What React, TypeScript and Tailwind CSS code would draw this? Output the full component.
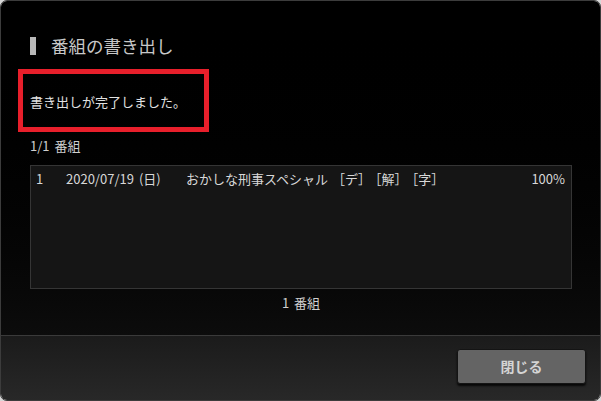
const font = { fontFamily: '"Noto Sans CJK JP", "Noto Sans", sans-serif' };

const tags = ["［デ］", "［解］", "［字］"];

export default function App() {
  return (
    <div className="w-[601px] h-[401px] bg-[#d8d8d8]" style={font}>
      <div className="relative flex h-full w-full flex-col overflow-hidden rounded-[7px] border border-[#3c3c3c]">
        <div className="flex h-[334px] flex-col bg-gradient-to-b from-[#000000] to-[#0c0c0c] pl-[29px] pr-[28px]">
          <div className="mt-[35px] flex items-center gap-[15px]">
            <span className="h-[18px] w-[6px] bg-[#b8b8b8]" />
            <h1 className="text-[17.5px] leading-[20px] text-[#c8c8c8]">番組の書き出し</h1>
          </div>

          <p className="mt-[38px] text-[13px] leading-[16px] text-[#e2e2e2]">書き出しが完了しました。</p>

          <p className="mt-[28px] text-[13px] leading-[16px] text-[#cfcfcf]">
            1/1<span className="ml-[5px]">番組</span>
          </p>

          <div className="mt-[11px] h-[124px] border border-[#353535] bg-[#151515] px-[5px] pt-[4px]">
            <div className="flex text-[13px] leading-[18px] text-[#d8d8d8]">
              <span className="w-[30px]">1</span>
              <span className="w-[120px]">
                2020/07/19<span className="ml-[5px]">(日)</span>
              </span>
              <span className="flex-1">
                おかしな刑事スペシャル
                {tags.map((t) => (
                  <span key={t} className="ml-[4px]">
                    {t}
                  </span>
                ))}
              </span>
              <span className="pr-[1px]">100%</span>
            </div>
          </div>

          <p className="mt-[6px] text-center text-[13px] leading-[16px] text-[#d0d0d0]">
            1<span className="ml-[5px]">番組</span>
          </p>
        </div>

        <div className="flex flex-1 items-start justify-end border-t border-[#3a3a3a] bg-gradient-to-b from-[#1b1b1b] to-[#282828] pr-[14px] pt-[13px]">
          <button className="h-[35px] w-[129px] rounded-[3px] border border-[#141414] bg-[#646464] text-[14px] font-bold text-[#d4d4d4] shadow-[0_2px_2px_rgba(0,0,0,0.8)]">
            閉じる
          </button>
        </div>

        <div className="absolute left-[17px] top-[68px] h-[63px] w-[191px] border-[5px] border-[#e81f2b]" />
      </div>
    </div>
  );
}
